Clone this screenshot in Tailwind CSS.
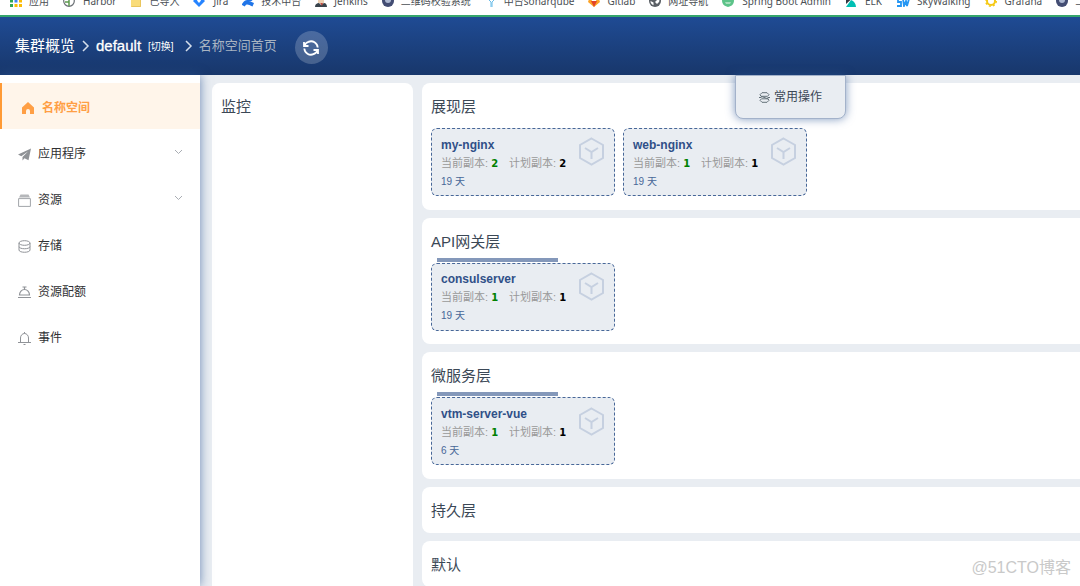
<!DOCTYPE html>
<html lang="zh-CN">
<head>
<meta charset="utf-8">
<meta name="viewport" content="width=device-width, initial-scale=1">
<title>default - 名称空间首页</title>
<script src="https://cdn.jsdelivr.net/npm/@tailwindcss/browser@4"></script>
</head>
<body class="relative flex h-screen flex-col overflow-hidden bg-[#e9edf2] font-['Liberation_Sans','Noto_Sans_CJK_SC',sans-serif] text-[#3b4856]">

<!-- Bookmarks -->
<nav aria-label="书签" class="h-[15px] shrink-0 overflow-hidden bg-white font-['Noto_Sans','Noto_Sans_CJK_SC',sans-serif] text-[10px] leading-4 text-[#4b4f54]">
  <div class="-mt-[7px] flex gap-[14px] pl-[10px] whitespace-nowrap">
    <a href="#" class="flex shrink-0 items-center gap-[7px]"><svg class="size-3" viewBox="0 0 12 12"><path fill="#ea4335" d="M0 0h3v3H0zM4.500 0h3v3h-3zM9 0h3v3H9z"/><path fill="#34a853" d="M0 4.500h3v3H0z"/><path fill="#4285f4" d="M4.500 4.500h3v3h-3z"/><path fill="#fbbc05" d="M9 4.500h3v3H9zM4.500 9h3v3h-3zM9 9h3v3H9z"/><path fill="#34a853" d="M0 9h3v3H0z"/></svg>应用</a>
    <a href="#" class="flex shrink-0 items-center gap-2"><svg class="size-3" viewBox="0 0 12 12" fill="none" stroke="#6b7075"><circle cx="6" cy="6" r="5.300" stroke-width="1.200"/><path d="M6 1v10M6 4h4M6 7H2" stroke="#5e9a4d" stroke-width="1.500"/></svg>Harbor</a>
    <a href="#" class="flex shrink-0 items-center gap-[7px]"><svg class="size-3" viewBox="0 0 12 12"><path fill="#f9dc7a" d="M1 1h4l1 1h5v10H1z"/><path fill="none" stroke="#e9c55d" d="M1.500 11.500h9V5"/></svg>已导入</a>
    <a href="#" class="flex shrink-0 items-center gap-2"><svg class="size-3" viewBox="0 0 12 12"><path fill="#2684ff" d="M6 0l6 6-6 6-6-6z"/><path fill="#fff" d="M6 3l2 2.500L6 8 4 5.500z"/></svg>Jira</a>
    <a href="#" class="flex shrink-0 items-center gap-[7px]"><svg class="size-3" viewBox="0 0 12 12" fill="#2075e8"><path d="M0 9c3-5 5-4 12-1l-1.500 3.500C6 9.500 4.500 8.500 2.800 11.500L0 10z"/><path d="M12 3C9 8 7 7 0 4L1.500.5C6 2.500 7.500 3.500 9.200.5L12 2z"/></svg>技术中台</a>
    <a href="#" class="flex shrink-0 items-center gap-[7px]"><svg class="size-3" viewBox="0 0 12 12"><path fill="#eed0b3" d="M3 0h6v8H3z"/><path fill="#39434b" d="M0 12c0-3 2-4 4-4l2 2 3-2c2 0 3 2 3 4z"/><path fill="#bd4a3f" d="M5 8h3l-1 3z"/></svg>Jenkins</a>
    <a href="#" class="flex shrink-0 items-center gap-[7px]"><svg class="size-3" viewBox="0 0 12 12"><circle cx="6" cy="6" r="6" fill="#434d73"/><circle cx="6" cy="5" r="3" fill="#aeb9d2"/></svg>二维码校验系统</a>
    <a href="#" class="flex shrink-0 items-center gap-[7px]"><svg class="size-3" viewBox="0 0 12 12" fill="none" stroke="#69bce8"><path d="M4 5l2 2v5M9 5L7 7v5"/></svg>中台sonarqube</a>
    <a href="#" class="flex shrink-0 items-center gap-[7px]"><svg class="size-3" viewBox="0 0 12 12"><path fill="#fca326" d="M0 7l2-6 2 5h4l2-5 2 6-6 5z"/><path fill="#e24329" d="M3 6h6l-3 6z"/></svg>Gitlab</a>
    <a href="#" class="flex shrink-0 items-center gap-[7px]"><svg class="size-3" viewBox="0 0 12 12"><circle cx="6" cy="6" r="6" fill="#5b6066"/><path fill="#fff" d="M6 2c4 0 5 3 4 5L8 9 6 7l2-2-3-1zM1.500 6l3 1.500v2.800C2.500 9.500 1.500 8 1.500 6z"/></svg>网址导航</a>
    <a href="#" class="flex shrink-0 items-center gap-2"><svg class="size-3" viewBox="0 0 12 12"><path fill="#5dc389" d="M0 5h12c0 4-2 6-6 7-4-1-6-3-6-7z"/><path fill="#a7dfbd" d="M3 7h6L8 9H4z"/></svg>Spring Boot Admin</a>
    <a href="#" class="flex shrink-0 items-center gap-2"><svg class="size-3" viewBox="0 0 12 12"><path fill="#343741" d="M1 0h10L1 9z"/><path fill="#00bfb3" d="M1 12l5-7c3 1 5 4 5 7z"/></svg>ELK</a>
    <a href="#" class="flex shrink-0 items-center gap-[7px]"><svg class="h-3 w-[14px]" viewBox="0 0 14 12" fill="none" stroke="#2596f3" stroke-width="1.800"><path d="M5 4H2v3h3v4H1M7 4l1 7 2-5 1 5 2-7"/></svg>SkyWalking</a>
    <a href="#" class="flex shrink-0 items-center gap-2"><svg class="size-3" viewBox="0 0 12 12" fill="none" stroke="#f5c915"><circle cx="6" cy="6" r="4" stroke-width="2"/><circle cx="6" cy="6" r="5.300" stroke-width="1.400" stroke-dasharray="2 2.160"/></svg>Grafana</a>
    <a href="#" class="flex shrink-0 items-center gap-[7px]"><svg class="size-3" viewBox="0 0 12 12"><circle cx="6" cy="6" r="6" fill="#434d73"/><circle cx="6" cy="5" r="3" fill="#aeb9d2"/></svg>二维码</a>
  </div>
</nav>

<!-- Header -->
<header class="flex h-[60px] shrink-0 items-center border-t-2 border-[#35a56c] bg-linear-to-b from-[#1f4b94] to-[#18376b] pl-[15px] text-white">
  <nav aria-label="面包屑" class="flex items-center text-[15px] leading-5">
    <a href="#">集群概览</a>
    <svg class="mx-[6px] h-3 w-[9px]" viewBox="0 0 9 12" fill="none" stroke="#d5deeb" stroke-width="1.500"><path d="M2 1l5 5-5 5"/></svg>
    <a href="#" class="[-webkit-text-stroke:0.3px_white]">default</a>
    <button type="button" class="ml-[7px] pt-[2px] text-[10px]">[切换]</button>
    <svg class="mr-[6px] ml-[10px] h-3 w-[9px]" viewBox="0 0 9 12" fill="none" stroke="#d5deeb" stroke-width="1.500"><path d="M2 1l5 5-5 5"/></svg>
    <span class="text-[13px] text-[#a9b4c2]">名称空间首页</span>
  </nav>
  <button type="button" aria-label="刷新" class="mt-[3px] ml-[18px] flex size-[33px] items-center justify-center rounded-full bg-white/20">
    <svg class="size-[18px]" viewBox="0 0 18 18" fill="none" stroke="#fff" stroke-width="1.800"><path d="M6.500 2.800A6.700 6.700 0 0 1 15.700 8.500M11.500 15.200A6.700 6.700 0 0 1 2.300 9.500M2 3v4h4.500M16 15v-4h-4.500M2.300 6.800A7 7 0 0 1 7 2.600M15.700 11.200A7 7 0 0 1 11 15.400"/></svg>
  </button>
</header>

<div class="flex min-h-0 flex-1">
  <!-- Side menu -->
  <nav aria-label="主菜单" class="z-10 w-[200px] shrink-0 bg-white pt-2 text-[12px] text-[#303133] shadow-[0_0_10px_#2c5595aa]">
    <a href="#" aria-current="page" class="flex h-[46px] items-center border-l-2 border-[#ff9a35] bg-[#fff5ea] pt-[3px] pl-5 font-bold text-[#ff9f45]">
      <svg class="mr-2 size-3" viewBox="0 0 12 12" fill="currentColor"><path d="M6 0l6 5.500V12H8V9a2 2 0 0 0-4 0v3H0V5.500z"/></svg>名称空间</a>
    <a href="#" class="flex h-[46px] items-center pt-1 pr-[17px] pl-[18px]">
      <svg class="mr-[7px] size-[13px]" viewBox="0 0 13 13" fill="#8f9296"><path d="M13 .5L0 6.500l3.300 1.700L10 3.500 4.500 9v3.500l2-2.300 4 2z"/></svg>应用程序
      <svg class="mb-1 ml-auto h-[6px] w-[9px]" viewBox="0 0 9 6" fill="none" stroke="#a9adb3"><path d="M1 1l3.500 3.500L8 1"/></svg></a>
    <a href="#" class="flex h-[46px] items-center pt-1 pr-[17px] pl-[18px]">
      <svg class="mr-[7px] size-[13px]" viewBox="0 0 13 13" fill="none" stroke="#a2a5a9"><path d="M.6 4.600h11.800v7.800H.6z"/><path fill="#b5b7ba" stroke="none" d="M2.500.5h8l1.500 3H1z"/></svg>资源
      <svg class="mb-1 ml-auto h-[6px] w-[9px]" viewBox="0 0 9 6" fill="none" stroke="#a9adb3"><path d="M1 1l3.500 3.500L8 1"/></svg></a>
    <a href="#" class="flex h-[46px] items-center pt-1 pl-[18px]">
      <svg class="mr-[7px] size-[13px]" viewBox="0 0 13 13" fill="none" stroke="#909398"><ellipse cx="6.500" cy="3" rx="5.500" ry="2.300"/><path d="M1 3v3.500c0 3 11 3 11 0V3M1 6.500V10c0 3 11 3 11 0V6.500"/></svg>存储</a>
    <a href="#" class="flex h-[46px] items-center pt-1 pl-[18px]">
      <svg class="mr-[7px] size-[13px]" viewBox="0 0 13 13" fill="none" stroke="#909398"><path d="M1.500 9a5 5.500 0 0 1 10 0zM0 11.500h13M4.500 1h4M6.500 1v3" stroke-width="1.200"/></svg>资源配额</a>
    <a href="#" class="flex h-[46px] items-center pt-1 pl-[18px]">
      <svg class="mr-[7px] size-[13px]" viewBox="0 0 13 13" fill="none" stroke="#909398"><path d="M2.500 10.500V6a4 4.500 0 0 1 8 0v4.500M0 10.500h13M6.500 0v1.500M5.500 12.500h2"/></svg>事件</a>
  </nav>

  <main class="flex min-w-0 flex-1 gap-[9px] pt-2 pl-3">
    <section class="w-[201px] shrink-0 rounded-t-lg bg-white px-[9px] pt-[14px]">
      <h2 class="text-[15px] leading-5">监控</h2>
    </section>

    <div class="flex min-w-0 flex-1 flex-col gap-2">
      <section class="shrink-0 rounded-l-lg bg-white px-[9px] pt-[14px] pb-[14px]">
        <h2 class="pb-[11px] text-[15px] leading-5">展现层</h2>
        <div class="flex gap-2">
          <article class="flex w-[184px] justify-between rounded-md border border-dashed border-[#476798] bg-[#e9edf2] pt-[7px] pr-[9px] pb-[4px] pl-[9px] text-[11px] leading-[18px] text-[#999]">
            <div>
              <h3 class="text-[12px] font-bold text-[#305088]">my-nginx</h3>
              <p class="flex gap-[11px] whitespace-nowrap"><span>当前副本: <b class="font-['DejaVu_Sans'] text-[10px]/[10px] text-[#008000]">2</b></span><span>计划副本: <b class="font-['DejaVu_Sans'] text-[10px]/[10px] text-black">2</b></span></p>
              <p class="pt-px text-[10px] text-[#476798]">19 天</p>
            </div>
            <svg class="mt-px h-[29px] w-[27px] shrink-0" viewBox="0 0 27 29" fill="none" stroke="#c6d0e0" stroke-width="2"><path d="M13.500 1.500l11.500 6.500v13l-11.500 6.500L2 21V8zM7 11l6.500 4 6.500-4M13.500 15v7"/></svg>
          </article>
          <article class="flex w-[184px] justify-between rounded-md border border-dashed border-[#476798] bg-[#e9edf2] pt-[7px] pr-[9px] pb-[4px] pl-[9px] text-[11px] leading-[18px] text-[#999]">
            <div>
              <h3 class="text-[12px] font-bold text-[#305088]">web-nginx</h3>
              <p class="flex gap-[11px] whitespace-nowrap"><span>当前副本: <b class="font-['DejaVu_Sans'] text-[10px]/[10px] text-[#008000]">1</b></span><span>计划副本: <b class="font-['DejaVu_Sans'] text-[10px]/[10px] text-black">1</b></span></p>
              <p class="pt-px text-[10px] text-[#476798]">19 天</p>
            </div>
            <svg class="mt-px h-[29px] w-[27px] shrink-0" viewBox="0 0 27 29" fill="none" stroke="#c6d0e0" stroke-width="2"><path d="M13.500 1.500l11.500 6.500v13l-11.500 6.500L2 21V8zM7 11l6.500 4 6.500-4M13.500 15v7"/></svg>
          </article>
        </div>
      </section>

      <section class="shrink-0 rounded-l-lg bg-white px-[9px] pt-[14px] pb-[13px]">
        <h2 class="pb-[11px] text-[15px] leading-5">API网关层</h2>
        <div class="flex gap-2">
          <article class="relative flex w-[184px] justify-between rounded-md border border-dashed border-[#476798] bg-[#e9edf2] pt-[6px] pr-[9px] pb-[5px] pl-[9px] text-[11px] leading-[18px] text-[#999]">
            <span class="absolute -top-[6px] left-[5px] h-1 w-[121px] bg-[#8498ba]"></span>
            <div>
              <h3 class="text-[12px] font-bold text-[#305088]">consulserver</h3>
              <p class="flex gap-[11px] whitespace-nowrap"><span>当前副本: <b class="font-['DejaVu_Sans'] text-[10px]/[10px] text-[#008000]">1</b></span><span>计划副本: <b class="font-['DejaVu_Sans'] text-[10px]/[10px] text-black">1</b></span></p>
              <p class="pt-px text-[10px] text-[#476798]">19 天</p>
            </div>
            <svg class="mt-[2px] h-[29px] w-[27px] shrink-0" viewBox="0 0 27 29" fill="none" stroke="#c6d0e0" stroke-width="2"><path d="M13.500 1.500l11.500 6.500v13l-11.500 6.500L2 21V8zM7 11l6.500 4 6.500-4M13.500 15v7"/></svg>
          </article>
        </div>
      </section>

      <section class="shrink-0 rounded-l-lg bg-white px-[9px] pt-[14px] pb-[14px]">
        <h2 class="pb-[11px] text-[15px] leading-5">微服务层</h2>
        <div class="flex gap-2">
          <article class="relative flex w-[184px] justify-between rounded-md border border-dashed border-[#476798] bg-[#e9edf2] pt-[7px] pr-[9px] pb-[4px] pl-[9px] text-[11px] leading-[18px] text-[#999]">
            <span class="absolute -top-[6px] left-[5px] h-1 w-[121px] bg-[#8498ba]"></span>
            <div>
              <h3 class="text-[12px] font-bold text-[#305088]">vtm-server-vue</h3>
              <p class="flex gap-[11px] whitespace-nowrap"><span>当前副本: <b class="font-['DejaVu_Sans'] text-[10px]/[10px] text-[#008000]">1</b></span><span>计划副本: <b class="font-['DejaVu_Sans'] text-[10px]/[10px] text-black">1</b></span></p>
              <p class="pt-px text-[10px] text-[#476798]">6 天</p>
            </div>
            <svg class="mt-[2px] h-[29px] w-[27px] shrink-0" viewBox="0 0 27 29" fill="none" stroke="#c6d0e0" stroke-width="2"><path d="M13.500 1.500l11.500 6.500v13l-11.500 6.500L2 21V8zM7 11l6.500 4 6.500-4M13.500 15v7"/></svg>
          </article>
        </div>
      </section>

      <section class="shrink-0 rounded-l-lg bg-white px-[9px] pt-[14px] pb-3">
        <h2 class="text-[15px] leading-5">持久层</h2>
      </section>
      <section class="shrink-0 rounded-l-lg bg-white px-[9px] pt-[14px] pb-3">
        <h2 class="text-[15px] leading-5">默认</h2>
      </section>
    </div>
  </main>
</div>

<!-- Floating actions tab under the header -->
<button type="button" class="absolute top-[75px] left-[735px] z-20 flex h-[44px] w-[111px] items-center justify-center gap-1 rounded-b-lg border border-[#a3b2ca] bg-[#e9edf2] text-[12px] shadow-[0_0_10px_#2c559599]">
  <svg class="size-[11px]" viewBox="0 0 11 11" fill="none" stroke="#65727a"><path d="M3 .7h5l2 2-1.500 1.600H2L1 2.700zM0 5.500h2.500M8.500 5.500H11M2 4.300L9.500 7M2.500 6.800H9l1 1.500-2 2H3l-2-2z"/></svg>常用操作</button>

<p class="absolute right-[9px] bottom-[8px] text-[16px] leading-5 text-[#c9c9c9]">@51CTO博客</p>
</body>
</html>
